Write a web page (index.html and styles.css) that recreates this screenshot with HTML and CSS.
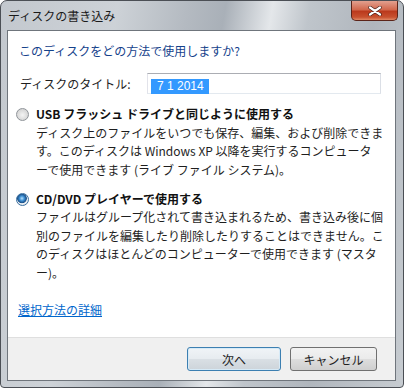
FILE: index.html
```html
<!DOCTYPE html>
<html lang="ja">
<head>
    <meta charset="UTF-8">
    <title>ディスクの書き込み</title>
    <link rel="stylesheet" href="styles.css">
</head>
<body>
<div class="window">
    <div class="titlebar">
        <span class="title">ディスクの書き込み</span>
        <div class="close-btn">
            <svg width="14" height="10" viewBox="0 0 14 10">
                <path d="M2 1.5 L12 8.5 M12 1.5 L2 8.5" stroke="#3b1a14" stroke-width="3.4" stroke-linecap="round"/>
                <path d="M2 1.5 L12 8.5 M12 1.5 L2 8.5" stroke="#fff" stroke-width="2.2" stroke-linecap="round"/>
            </svg>
        </div>
    </div>
    <div class="client">
        <div class="content">
            <div class="instruction">このディスクをどの方法で使用しますか?</div>
            <div class="title-row">
                <span class="label">ディスクのタイトル:</span>
                <div class="textbox"><span class="selected">7 1 2014</span></div>
            </div>
            <div class="option">
                <span class="radio"></span>
                <div class="option-body">
                    <div class="option-title">USB フラッシュ ドライブと同じように使用する</div>
                    <div class="option-desc">ディスク上のファイルをいつでも保存、編集、および削除できま<br>す。このディスクは Windows XP 以降を実行するコンピュータ<br>ーで使用できます (ライブ ファイル システム)。</div>
                </div>
            </div>
            <div class="option">
                <span class="radio checked"></span>
                <div class="option-body">
                    <div class="option-title">CD/DVD プレイヤーで使用する</div>
                    <div class="option-desc">ファイルはグループ化されて書き込まれるため、書き込み後に個<br>別のファイルを編集したり削除したりすることはできません。こ<br>のディスクはほとんどのコンピューターで使用できます (マスタ<br>ー)。</div>
                </div>
            </div>
            <a class="help-link" href="#">選択方法の詳細</a>
        </div>
        <div class="footer">
            <button class="btn default">次へ</button>
            <button class="btn cancel">キャンセル</button>
        </div>
    </div>
</div>
</body>
</html>
```
FILE: styles.css
```css
body {
    margin: 0;
    padding: 0;
    font-family: "Noto Sans CJK JP", "Noto Sans", sans-serif;
    font-size: 12px;
    color: #1e1e1e;
    background-color: #fff;
}

.window {
    width: 404px;
    height: 388px;
    box-sizing: border-box;
    border: 1px solid #4b4f55;
    border-radius: 7px 7px 4px 4px;
    padding: 0 7px 6px 6px;
    background: linear-gradient(100deg, #c3c8ce 0%, #cdd2d7 25%, #b4bac1 40%, #a9b0b8 48%, #e4e7ea 58%, #bfc5cb 66%, #b0b6bd 80%, #c7ccd1 100%);
    overflow: hidden;
}

.titlebar {
    height: 29px;
    display: flex;
    justify-content: space-between;
    align-items: flex-start;
}

.title {
    margin: 6px 0 0 1px;
    line-height: 18px;
    color: #1a1a1a;
}

.close-btn {
    width: 47px;
    height: 20px;
    box-sizing: border-box;
    margin-right: -2px;
    border: 1px solid #5b2419;
    border-top: none;
    border-radius: 0 0 5px 5px;
    background: linear-gradient(#e2a08f 0%, #d2694e 45%, #bb3a1d 55%, #c8512f 85%, #e08864 100%);
    display: flex;
    align-items: center;
    justify-content: center;
}

.client {
    height: 351px;
    box-sizing: border-box;
    border: 1px solid #6f757c;
    background-color: #fff;
    display: flex;
    flex-direction: column;
}

.content {
    flex: 1;
    padding: 11px 14px 0 11px;
}

.instruction {
    color: #15428b;
    line-height: 18px;
}

.title-row {
    display: flex;
    align-items: center;
    margin-top: 13px;
}

.label {
    width: 128px;
    padding-left: 1px;
    box-sizing: border-box;
}

.textbox {
    width: 234px;
    height: 21px;
    box-sizing: border-box;
    border: 1px solid #abadb3;
    border-color: #abadb3 #dbdfe6 #e3e9ef #e2e3ea;
    padding: 2px 0 0 3px;
}

.selected {
    display: inline-block;
    width: 58px;
    height: 15px;
    line-height: 15px;
    padding-left: 6px;
    box-sizing: border-box;
    background-color: #3399ff;
    color: #fff;
    font-family: "Liberation Sans", sans-serif;
}

.option {
    display: flex;
    align-items: flex-start;
    line-height: 18.5px;
    margin-top: 11px;
}

.option + .option {
    margin-top: 10.5px;
}

.radio {
    width: 13px;
    height: 13px;
    box-sizing: border-box;
    margin: 3px 7px 0 -3px;
    border: 1px solid #8f9499;
    border-radius: 50%;
    background: radial-gradient(circle at 50% 55%, #f4f4f4 0%, #dcdcdc 55%, #cbcbcb 100%);
    flex-shrink: 0;
}

.radio.checked {
    border-color: #3a6f9f;
    background: radial-gradient(circle at 45% 40%, #b9e3ff 0%, #3b8ccf 28%, #1a4e86 50%, #eef2f5 58%, #d6d9dc 100%);
}

.option-title {
    font-weight: bold;
    color: #111;
}

.option-desc {
    white-space: nowrap;
}

.help-link {
    display: inline-block;
    margin-top: 19px;
    margin-left: -1px;
    line-height: 18.5px;
    color: #0066cc;
    text-decoration: underline;
}

.footer {
    height: 43px;
    border-top: 1px solid #dfdfdf;
    background-color: #f0f0f0;
    display: flex;
    justify-content: flex-end;
    align-items: flex-start;
    gap: 9px;
    padding: 9px 18px 0 0;
    box-sizing: border-box;
}

.btn {
    height: 24px;
    border: 1px solid #707070;
    border-radius: 3px;
    font-family: "Noto Sans CJK JP", "Noto Sans", sans-serif;
    font-size: 12px;
    color: #1e1e1e;
    padding: 0;
    background: linear-gradient(#f2f2f2 0%, #ebebeb 48%, #dddddd 52%, #cfcfcf 100%);
}

.btn.default {
    width: 94px;
    border-color: #3c7fb1;
    box-shadow: inset 0 0 0 1px #d6eaf7;
    background: linear-gradient(#f0f4f7 0%, #e7ecf0 48%, #d9dfe4 52%, #cdd4da 100%);
}

.btn.cancel {
    width: 87px;
}
```
